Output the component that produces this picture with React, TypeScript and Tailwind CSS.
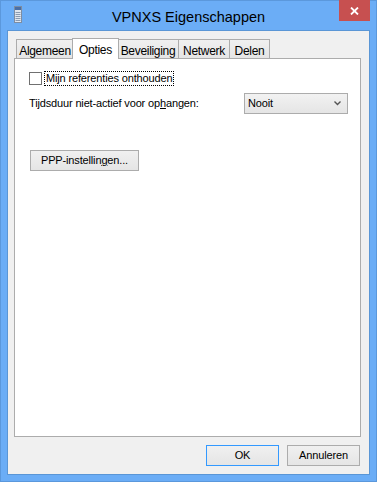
const ui = { fontFamily: '"Liberation Sans", Arial, sans-serif' };

function ServerIcon() {
  return (
    <svg width="8" height="17" viewBox="0 0 8 17">
      <rect x="0.5" y="0.5" width="7" height="16" fill="#dfe6ef" stroke="#7d8da3" />
      <rect x="1" y="1" width="6" height="3" fill="#4a6fa5" />
      <line x1="1.5" y1="6.5" x2="6.5" y2="6.5" stroke="#8a9ab0" />
      <line x1="1.5" y1="8.5" x2="6.5" y2="8.5" stroke="#8a9ab0" />
      <line x1="1.5" y1="10.5" x2="6.5" y2="10.5" stroke="#8a9ab0" />
      <line x1="1.5" y1="12.5" x2="6.5" y2="12.5" stroke="#8a9ab0" />
      <line x1="1.5" y1="14.5" x2="6.5" y2="14.5" stroke="#8a9ab0" />
    </svg>
  );
}

function Tab({ label, width, active }: { label: string; width: string; active?: boolean }) {
  if (active) {
    return (
      <div
        className={`${width} relative z-10 -ml-px -mb-px flex h-[21px] justify-center border border-b-0 border-[#acacac] bg-white pt-[2px] text-[12px] tracking-[-0.3px] text-black`}
      >
        {label}
      </div>
    );
  }
  return (
    <div
      className={`${width} -ml-px flex h-[19px] justify-center border border-b-0 border-[#acacac] bg-gradient-to-b from-[#f0f0f0] to-[#e5e5e5] pt-[2px] text-[12px] tracking-[-0.3px] text-black first:ml-0`}
    >
      {label}
    </div>
  );
}

function Button({ children, width, focused }: { children: React.ReactNode; width: string; focused?: boolean }) {
  return (
    <div
      className={`${width} flex h-[21px] items-center justify-center border bg-gradient-to-b from-[#f0f0f0] to-[#e5e5e5] text-[11px] tracking-[-0.15px] text-black ${
        focused ? "border-[#3399ff]" : "border-[#acacac]"
      }`}
    >
      {children}
    </div>
  );
}

export default function App() {
  return (
    <div style={ui} className="flex h-[482px] w-[377px] flex-col border border-[#5b98dc] bg-[#6badf6]">
      {/* title bar */}
      <div className="relative flex h-[29px] items-center">
        <div className="ml-[13px] mt-[-2px]">
          <ServerIcon />
        </div>
        <div className="absolute left-0 right-0 top-[6px] text-center text-[14.5px] text-black">VPNXS Eigenschappen</div>
        <div className="absolute right-[6px] top-[-1px] flex h-[21px] w-[31px] items-center justify-center bg-[#c75050]">
          <svg width="9" height="8" viewBox="0 0 9 8">
            <path d="M1 0.5 L8 7.5 M8 0.5 L1 7.5" stroke="#fff" strokeWidth="1.8" />
          </svg>
        </div>
      </div>

      {/* client */}
      <div className="mx-[6px] flex h-[445px] flex-col border border-[#5a96d6] bg-[#f0f0f0] pl-[6px] pr-[8px] pt-[7px]">
        <div className="flex h-[20px] items-end pl-[2px]">
          <Tab label="Algemeen" width="w-[58px]" />
          <Tab label="Opties" width="w-[47px] ml-[-2px]" active />
          <Tab label="Beveiliging" width="w-[62px] ml-[-2px]" />
          <Tab label="Netwerk" width="w-[52px]" />
          <Tab label="Delen" width="w-[41px]" />
        </div>
        <div className="flex h-[379px] flex-col border border-[#acacac] bg-white pl-[14px] pt-[12px] text-[11px] tracking-[-0.15px] text-black">
          <div className="flex items-center">
            <div className="h-[13px] w-[13px] border border-[#707070] bg-white" />
            <div className="ml-[2px] border border-dotted border-black px-px leading-[13px]">Mijn referenties onthouden</div>
          </div>
          <div className="mt-[7px] flex items-center pr-[12px]">
            <div className="flex-1">
              Tijdsduur niet-actief voor op<span className="underline">h</span>angen:
            </div>
            <div className="flex h-[21px] w-[104px] items-center justify-between border border-[#acacac] bg-gradient-to-b from-[#f2f2f2] to-[#e5e5e5] pl-[3px] pr-[6px]">
              <span>Nooit</span>
              <svg width="7" height="5" viewBox="0 0 7 5">
                <path d="M0.5 0.5 L3.5 3.5 L6.5 0.5" fill="none" stroke="#555" strokeWidth="1.4" />
              </svg>
            </div>
          </div>
          <div className="mt-[36px] pl-px">
            <Button width="w-[109px]">
              PPP-instellin<span className="underline">g</span>en...
            </Button>
          </div>
        </div>
        <div className="mt-[8px] flex justify-end gap-[8px] pr-px">
          <Button width="w-[73px]" focused>
            OK
          </Button>
          <Button width="w-[73px]">Annuleren</Button>
        </div>
      </div>
    </div>
  );
}
